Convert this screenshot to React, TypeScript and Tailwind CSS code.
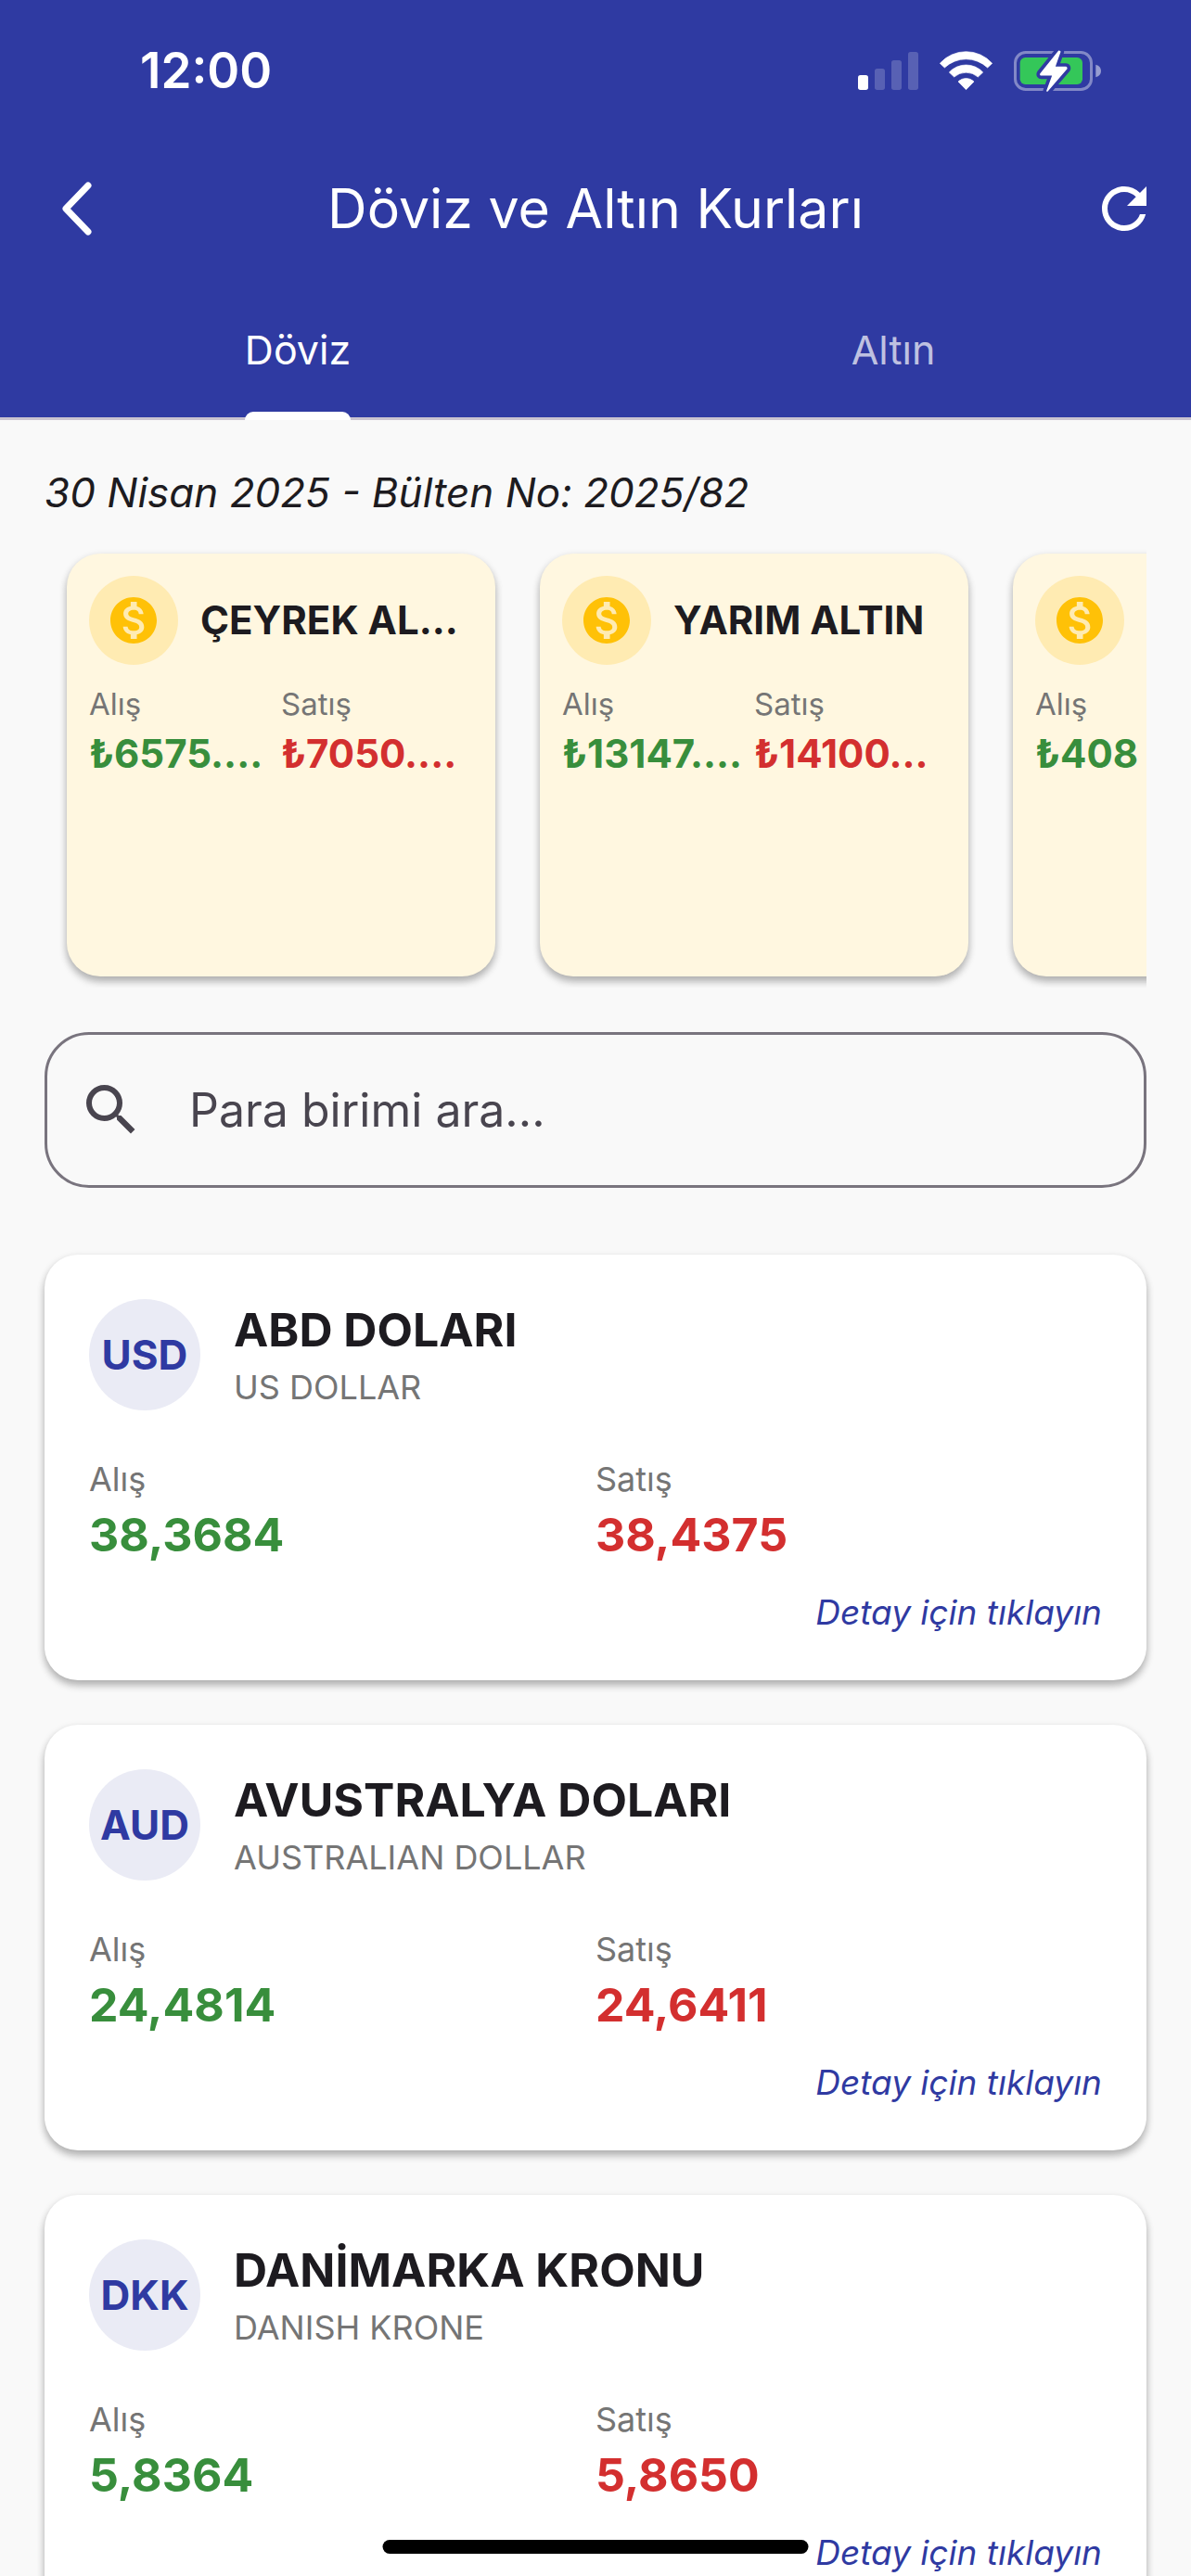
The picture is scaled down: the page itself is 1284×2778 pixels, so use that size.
import { useState } from "react"
import { MdMonetizationOn, MdRefresh, MdSearch } from "react-icons/md"

const goldItems = [
  { name: "ÇEYREK AL...", buy: "₺6575....", sell: "₺7050...." },
  { name: "YARIM ALTIN", buy: "₺13147....", sell: "₺14100..." },
  { name: "", buy: "₺408", sell: "" },
]

const currencies = [
  { code: "USD", name: "ABD DOLARI", english: "US DOLLAR", buy: "38,3684", sell: "38,4375" },
  { code: "AUD", name: "AVUSTRALYA DOLARI", english: "AUSTRALIAN DOLLAR", buy: "24,4814", sell: "24,6411" },
  { code: "DKK", name: "DANİMARKA KRONU", english: "DANISH KRONE", buy: "5,8364", sell: "5,8650" },
]

const tabs = ["Döviz", "Altın"]

function StatusIcons() {
  return (
    <svg viewBox="135 66 786 141" className="h-[47px] w-[262px]" aria-hidden="true">
      <rect x="135" y="150" width="33" height="48" rx="8" fill="#fff" />
      <g fill="#fff" fillOpacity="0.2">
        <rect x="189" y="129" width="33" height="69" rx="8" />
        <rect x="243" y="102" width="33" height="96" rx="8" />
        <rect x="297" y="75" width="33" height="123" rx="8" />
      </g>
      <g fill="#fff" stroke="#fff" strokeWidth="2" strokeLinejoin="round">
        <path d="M400 112A113 113 0 0 1 569 112L554 126A101 101 0 0 0 415 126Z" />
        <path d="M430 141A74 74 0 0 1 539 141L523 156A58 58 0 0 0 446 156Z" />
        <path d="M459 171A36 36 0 0 1 510 171L484.500 197Z" />
      </g>
      <rect x="643.500" y="76.500" width="246" height="120" rx="34" fill="none" stroke="#fff" strokeOpacity="0.4" strokeWidth="9" />
      <path d="M904 116Q921 121 921 136.500T904 157Z" fill="#fff" fillOpacity="0.5" />
      <rect x="659" y="93" width="202" height="87" rx="17" fill="#34c759" />
      <path
        d="M785 73L726 146Q725 149 728 149H766L747 201L809 129Q810 125 807 125H770L788 74Z"
        fill="#2f3aa2"
        stroke="#2f3aa2"
        strokeWidth="27"
        strokeLinejoin="round"
      />
      <path
        d="M785 73L726 146Q725 149 728 149H766L747 201L809 129Q810 125 807 125H770L788 74Z"
        fill="#fff"
        stroke="#fff"
        strokeWidth="5"
        strokeLinejoin="round"
      />
    </svg>
  )
}

function GoldCard({ item }) {
  return (
    <article className="h-[456px] w-[462px] shrink-0 rounded-[36px] bg-[#fff7e0] p-6 shadow-[0_3px_9px_rgba(0,0,0,0.15),0_6px_9px_rgba(0,0,0,0.2)]">
      <div className="flex items-center gap-6">
        <div className="flex size-24 shrink-0 items-center justify-center rounded-full bg-[#ffebb2]">
          <MdMonetizationOn className="size-[60px] text-[#ffc107]" />
        </div>
        {item.name && <h2 className="text-[42px] leading-[48px] font-bold whitespace-nowrap">{item.name}</h2>}
      </div>
      <div className="mt-[22px] grid grid-cols-2 whitespace-nowrap">
        <div>
          <p className="text-[33px] leading-[40px] text-[#757575]">Alış</p>
          <p className="mt-[10px] text-[42px] leading-[48px] font-bold text-[#388e3c]">{item.buy}</p>
        </div>
        {item.sell && (
          <div>
            <p className="text-[33px] leading-[40px] text-[#757575]">Satış</p>
            <p className="mt-[10px] text-[42px] leading-[48px] font-bold text-[#d32f2f]">{item.sell}</p>
          </div>
        )}
      </div>
    </article>
  )
}

function CurrencyCard({ currency }) {
  return (
    <article className="rounded-[36px] bg-white p-12 shadow-[0_3px_9px_rgba(0,0,0,0.15),0_6px_9px_rgba(0,0,0,0.2)]">
      <div className="flex items-center gap-9">
        <div className="flex size-[120px] shrink-0 items-center justify-center rounded-full bg-[#eaebf5] text-[44px] font-bold text-[#2f3aa2]">
          {currency.code}
        </div>
        <div>
          <h2 className="text-[50px] leading-[60px] font-bold">{currency.name}</h2>
          <p className="mt-[10px] text-[36px] leading-[44px] text-[#757575]">{currency.english}</p>
        </div>
      </div>
      <div className="mt-[52px] grid grid-cols-2">
        <div>
          <p className="text-[36px] leading-[44px] text-[#757575]">Alış</p>
          <p className="mt-2 text-[50px] leading-[60px] font-bold text-[#388e3c]">{currency.buy}</p>
        </div>
        <div>
          <p className="text-[36px] leading-[44px] text-[#757575]">Satış</p>
          <p className="mt-2 text-[50px] leading-[60px] font-bold text-[#d32f2f]">{currency.sell}</p>
        </div>
      </div>
      <div className="mt-8 mb-[3px] flex justify-end">
        <a href="#" className="text-[37px] leading-[44px] text-[#2f3aa2] italic">
          Detay için tıklayın
        </a>
      </div>
    </article>
  )
}

export default function App() {
  const [activeTab, setActiveTab] = useState("Döviz")
  const [query, setQuery] = useState("")

  return (
    <div className="relative flex h-screen flex-col overflow-hidden bg-[#f9f9f9] font-['Inter',sans-serif] text-[#1d1b20]">
      <header className="shrink-0 bg-[#2f3aa2] text-white">
        <div className="flex h-[141px] items-center justify-between pt-3 pr-[97px] pl-[151px]">
          <span className="text-[53px] font-semibold">12:00</span>
          <StatusIcons />
        </div>
        <div className="flex h-[168px] items-center justify-between px-9">
          <button type="button" aria-label="Geri" className="flex size-24 items-center justify-center">
            <svg viewBox="0 0 40 64" className="h-16 w-10" fill="none" stroke="currentColor" strokeWidth="7" strokeLinecap="round" strokeLinejoin="round">
              <path d="M31 7L7 32L31 57" />
            </svg>
          </button>
          <h1 className="text-[59px]">Döviz ve Altın Kurları</h1>
          <button type="button" aria-label="Yenile" className="flex w-24 justify-end">
            <MdRefresh className="size-[72px]" />
          </button>
        </div>
        <div role="tablist" className="grid h-36 grid-cols-2 border-b-3 border-[#cac4d0]">
          {tabs.map((tab) => (
            <button
              key={tab}
              type="button"
              role="tab"
              aria-selected={tab === activeTab}
              onClick={() => setActiveTab(tab)}
              className={`flex justify-center text-[43px] ${tab === activeTab ? "text-white" : "text-white/70"}`}
            >
              <span className="relative flex h-36 items-center pb-2">
                {tab}
                {tab === activeTab && <span className="absolute inset-x-0 bottom-0 h-[9px] rounded-t-[9px] bg-white" />}
              </span>
            </button>
          ))}
        </div>
      </header>

      <main className="flex-1 overflow-hidden px-12 pt-[51px]">
        <p className="text-[44px] leading-[54px] italic">30 Nisan 2025 - Bülten No: 2025/82</p>

        <section className="mt-[15px] flex gap-12 overflow-hidden px-6 pt-6 pb-3">
          {goldItems.map((item) => (
            <GoldCard key={item.buy} item={item} />
          ))}
        </section>

        <label className="mt-12 flex h-[168px] items-center gap-12 rounded-[48px] border-3 border-[#79747e] px-[33px] text-[#49454f]">
          <MdSearch className="size-[72px] shrink-0" />
          <input
            type="text"
            aria-label="Para birimi ara"
            placeholder="Para birimi ara..."
            value={query}
            onChange={(e) => setQuery(e.target.value)}
            className="min-w-0 flex-1 bg-transparent text-[50px] outline-none placeholder:text-[#49454f]"
          />
        </label>

        <section className="mt-[72px] flex flex-col gap-12">
          {currencies.map((currency) => (
            <CurrencyCard key={currency.code} currency={currency} />
          ))}
        </section>
      </main>

      {/* home indicator */}
      <div className="absolute bottom-6 left-1/2 h-[15px] w-[459px] -translate-x-1/2 rounded-full bg-black" />
    </div>
  )
}
